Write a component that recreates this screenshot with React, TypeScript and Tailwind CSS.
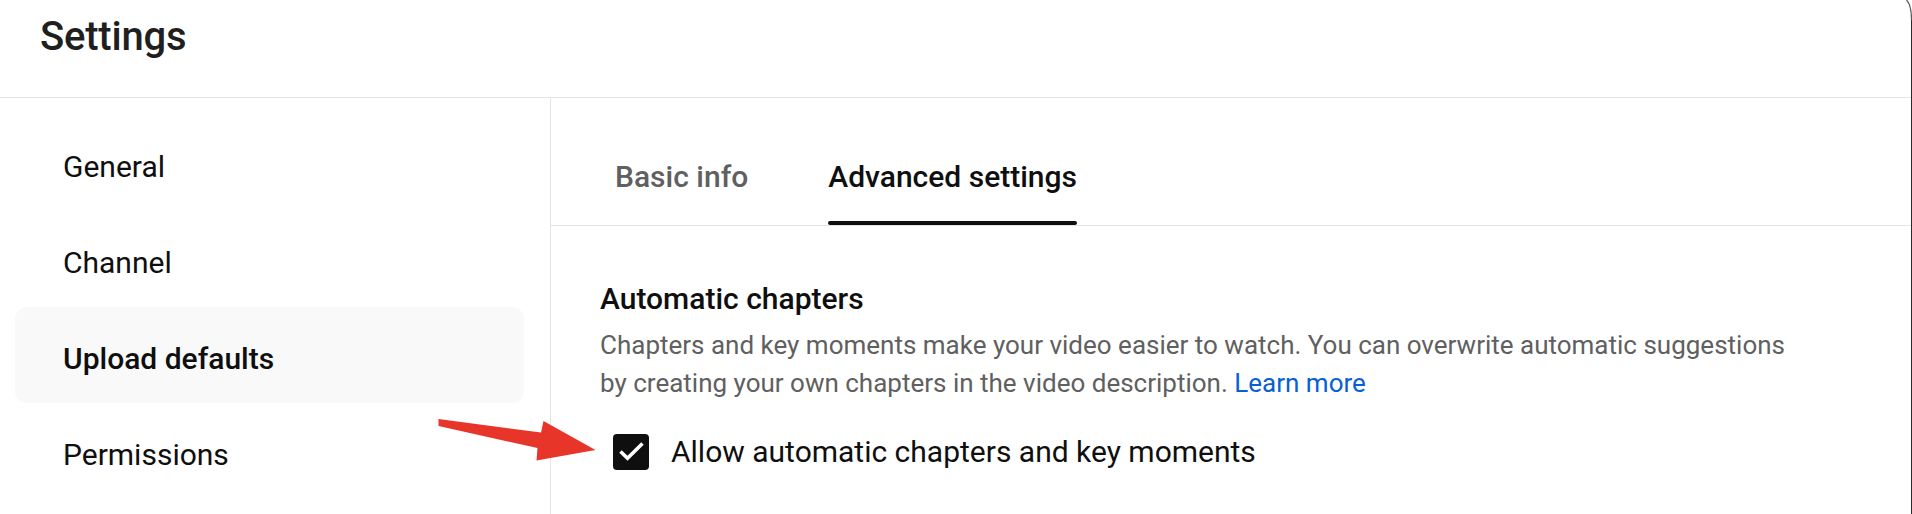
import React from "react";

const navItems = [
  { label: "General", active: false },
  { label: "Channel", active: false },
  { label: "Upload defaults", active: true },
  { label: "Permissions", active: false },
];

export default function App() {
  return (
    <div className="relative w-full h-[514px] overflow-hidden bg-white font-[Roboto,sans-serif] text-[#0f0f0f]">
      {/* Header */}
      <div className="h-[98px] border-b border-[#e5e5e5] pl-[40px] pt-[17px]">
        <h1 className="text-[40px] leading-[40px] font-medium text-[#1f1f1f] tracking-[-0.2px]">Settings</h1>
      </div>

      <div className="flex h-[416px]">
        {/* Sidebar */}
        <nav className="w-[551px] shrink-0 border-r border-[#e5e5e5] pt-[17px]">
          {navItems.map((item) => (
            <div
              key={item.label}
              className={`ml-[15px] w-[509px] h-[96px] rounded-[12px] pl-[48px] pt-[8px] flex items-center text-[30px] leading-[30px] ${
                item.active ? "bg-[#f9f9f9] font-medium" : "font-normal"
              }`}
            >
              {item.label}
            </div>
          ))}
        </nav>

        {/* Main */}
        <main className="flex-1 min-w-0">
          <div className="h-[128px] border-b border-[#e5e5e5] flex pl-[64px] gap-[80px]">
            <div className="flex flex-col pt-[64px]">
              <span className="text-[30px] leading-[30px] font-medium text-[#606060]">Basic info</span>
            </div>
            <div className="flex flex-col pt-[64px]">
              <span className="text-[30px] leading-[30px] font-medium text-[#0f0f0f]">Advanced settings</span>
              <div className="mt-[29px] h-[4px] rounded-full bg-[#0f0f0f]" />
            </div>
          </div>

          <section className="pl-[49px] pt-[58px]">
            <h2 className="text-[30px] leading-[30px] font-medium text-[#0f0f0f]">Automatic chapters</h2>
            <p className="mt-[12px] max-w-[1195px] text-[26px] leading-[38px] text-[#606060]">
              Chapters and key moments make your video easier to watch. You can overwrite automatic suggestions by
              creating your own chapters in the video description.{" "}
              <a className="text-[#065fd4]">Learn more</a>
            </p>
            <label className="mt-[32px] ml-[13px] flex items-center gap-[22px]">
              <span className="w-[36px] h-[36px] rounded-[4px] bg-[#0f0f0f] flex items-center justify-center">
                <svg width="36" height="36" viewBox="0 0 36 36">
                  <path d="M7.5 17.5 L14.5 24.2 L29.5 9.5" fill="none" stroke="#ffffff" strokeWidth="3.6" />
                </svg>
              </span>
              <span className="text-[30px] leading-[30px] text-[#0f0f0f]">Allow automatic chapters and key moments</span>
            </label>
          </section>
        </main>
      </div>

      {/* Annotation arrow */}
      <svg className="absolute left-[430px] top-[410px]" width="175" height="60" viewBox="0 0 175 60">
        <polygon
          points="8.5,9 111,22.5 113.5,11 165.5,40 106.5,50.5 107.5,38 8.5,16"
          fill="#e8352a"
        />
      </svg>

      {/* Window frame edge */}
      <div className="absolute right-0 top-[16px] bottom-0 w-px bg-[#2a2a2a]" />
      <svg className="absolute right-0 top-0" width="7" height="20" viewBox="0 0 7 20">
        <path d="M1.5 0 Q6.5 5 6.5 20" fill="none" stroke="#5a5a5a" strokeWidth="1.2" />
      </svg>
    </div>
  );
}
